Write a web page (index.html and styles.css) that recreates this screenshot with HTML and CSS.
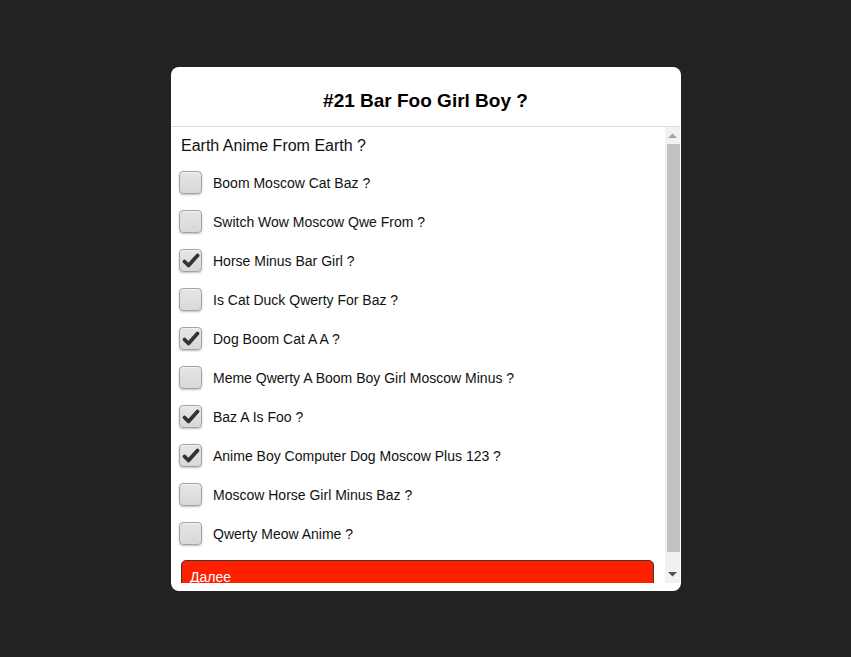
FILE: index.html
```html
<!DOCTYPE html>
<html>
<head>
<meta charset="utf-8">
<link rel="stylesheet" href="styles.css">
</head>
<body>
<div class="stage">
  <div class="card">
    <div class="card-head">#21 Bar Foo Girl Boy ?</div>
    <div class="card-body">
      <div class="scroll-content">
        <div class="question">Earth Anime From Earth ?</div>
        <ul class="options">
          <li class="opt"><span class="box"></span><span class="lbl">Boom Moscow Cat Baz ?</span></li>
          <li class="opt"><span class="box"></span><span class="lbl">Switch Wow Moscow Qwe From ?</span></li>
          <li class="opt"><span class="box checked"><svg viewBox="0 0 22 22" width="22" height="22"><path d="M4.5 11.5 L8.5 15.5 L17.5 5.5" fill="none" stroke="#333" stroke-width="3.8" stroke-linecap="round" stroke-linejoin="round"/></svg></span><span class="lbl">Horse Minus Bar Girl ?</span></li>
          <li class="opt"><span class="box"></span><span class="lbl">Is Cat Duck Qwerty For Baz ?</span></li>
          <li class="opt"><span class="box checked"><svg viewBox="0 0 22 22" width="22" height="22"><path d="M4.5 11.5 L8.5 15.5 L17.5 5.5" fill="none" stroke="#333" stroke-width="3.8" stroke-linecap="round" stroke-linejoin="round"/></svg></span><span class="lbl">Dog Boom Cat A A ?</span></li>
          <li class="opt"><span class="box"></span><span class="lbl">Meme Qwerty A Boom Boy Girl Moscow Minus ?</span></li>
          <li class="opt"><span class="box checked"><svg viewBox="0 0 22 22" width="22" height="22"><path d="M4.5 11.5 L8.5 15.5 L17.5 5.5" fill="none" stroke="#333" stroke-width="3.8" stroke-linecap="round" stroke-linejoin="round"/></svg></span><span class="lbl">Baz A Is Foo ?</span></li>
          <li class="opt"><span class="box checked"><svg viewBox="0 0 22 22" width="22" height="22"><path d="M4.5 11.5 L8.5 15.5 L17.5 5.5" fill="none" stroke="#333" stroke-width="3.8" stroke-linecap="round" stroke-linejoin="round"/></svg></span><span class="lbl">Anime Boy Computer Dog Moscow Plus 123 ?</span></li>
          <li class="opt"><span class="box"></span><span class="lbl">Moscow Horse Girl Minus Baz ?</span></li>
          <li class="opt"><span class="box"></span><span class="lbl">Qwerty Meow Anime ?</span></li>
        </ul>
        <div class="next"><a href="#" class="next-link">Далее</a></div>
      </div>
      <div class="scrollbar">
        <div class="sb-btn"><svg width="9" height="5" viewBox="0 0 9 5"><path d="M0 5 L4.5 0.5 L9 5 Z" fill="#a3a3a3"/></svg></div>
        <div class="sb-track"><div class="sb-thumb"></div></div>
        <div class="sb-btn"><svg width="9" height="5" viewBox="0 0 9 5"><path d="M0 0 L4.5 4.5 L9 0 Z" fill="#505050"/></svg></div>
      </div>
    </div>
  </div>
</div>
</body>
</html>
```

FILE: styles.css
```css
html, body {
  margin: 0;
  padding: 0;
  background: #222222;
  font-family: "Liberation Sans", Arial, sans-serif;
  color: #111;
}
.stage {
  width: 851px;
  height: 657px;
  display: flex;
  justify-content: center;
  padding-top: 67px;
  box-sizing: border-box;
}
.card {
  width: 510px;
  height: 524px;
  background: #fff;
  border-radius: 8px;
  overflow: hidden;
  display: flex;
  flex-direction: column;
  margin-left: 1px;
  padding-bottom: 8px;
  padding-right: 1px;
  box-sizing: border-box;
}
.card-head {
  flex: none;
  height: 60px;
  border-bottom: 1px solid #dddddd;
  display: flex;
  align-items: center;
  justify-content: center;
  font-weight: bold;
  font-size: 19px;
  color: #000;
  padding-top: 9px;
  box-sizing: border-box;
}
.card-body {
  height: 456px;
  display: flex;
  flex: none;
}
.scroll-content {
  flex: 1;
  overflow: hidden;
  padding: 9px 11px 0 8px;
}
.scrollbar {
  width: 15px;
  flex: none;
  display: flex;
  flex-direction: column;
  background: #f1f1f1;
}
.sb-btn {
  height: 17px;
  flex: none;
  display: flex;
  align-items: center;
  justify-content: center;
}
.sb-btn svg {
  display: block;
}
.sb-track {
  flex: 1;
  padding-left: 2px;
}
.sb-thumb {
  height: 408px;
  background: #c1c1c1;
}
.question {
  font-size: 16px;
  line-height: 20px;
  padding-left: 2px;
  margin-bottom: 7px;
  color: #111;
}
.options {
  list-style: none;
  margin: 0;
  padding: 0;
}
.opt {
  height: 39px;
  display: flex;
  align-items: center;
}
.box {
  width: 23px;
  height: 23px;
  box-sizing: border-box;
  border: 1px solid #a3a3a3;
  border-radius: 4px;
  background: linear-gradient(#e6e6e6, #d8d8d8);
  box-shadow: 0 1px 2px rgba(0,0,0,0.25), inset 0 1px 0 rgba(255,255,255,0.5);
  flex: none;
  display: flex;
  align-items: center;
  justify-content: center;
  margin-right: 11px;
}
.box svg {
  display: block;
  flex: none;
}
.lbl {
  font-size: 14px;
  color: #111;
}
.next {
  margin: 7px 0 0 2px;
  height: 36px;
  background: #ff2000;
  border: 1px solid #3a3a3a;
  border-radius: 5px;
  box-sizing: border-box;
  padding: 7px 8px;
}
.next-link {
  color: #fff;
  font-size: 14px;
  text-decoration: underline;
}
```
